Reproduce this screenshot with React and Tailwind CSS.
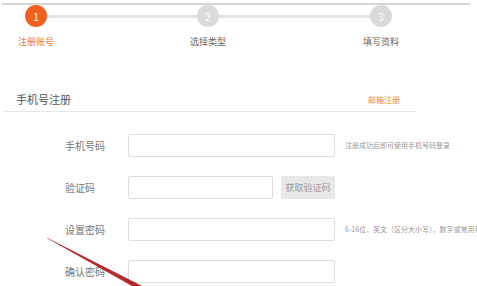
import React from 'react';

const font = { fontFamily: '"Noto Sans CJK SC", "Noto Sans", sans-serif' };

const Field = ({ label, children, hint }) => (
  <div className="flex items-center h-[23px]">
    <div className="w-[128px] shrink-0 pl-[65px] text-[10px] text-[#777]">{label}</div>
    {children}
    {hint && <div className="ml-[10px] shrink-0 text-[7px] text-[#999] whitespace-nowrap">{hint}</div>}
  </div>
);

const Input = ({ w = 'w-[207px]' }) => (
  <div className={`${w} shrink-0 h-[23px] border border-[#dcdcdc] rounded-[2px] bg-white`} />
);

export default function App() {
  return (
    <div className="relative w-[477px] h-[286px] overflow-hidden bg-white" style={font}>
      {/* top rule */}
      <div className="mt-[3px] ml-[2px] w-[468px] h-[2px] bg-[#d6d6d6]" />

      {/* steps */}
      <div className="flex items-center pl-[25px]">
        <div className="w-[22px] h-[22px] rounded-full bg-[#f2601e] text-white text-[10px] flex items-center justify-center">1</div>
        <div className="w-[150px] h-[3px] bg-[#e2e2e2]" />
        <div className="w-[22px] h-[22px] rounded-full bg-[#dadada] text-white text-[10px] flex items-center justify-center">2</div>
        <div className="w-[151px] h-[3px] bg-[#e2e2e2]" />
        <div className="w-[22px] h-[22px] rounded-full bg-[#dadada] text-white text-[10px] flex items-center justify-center">3</div>
      </div>
      <div className="flex mt-[8px] text-[9px] leading-[14px]">
        <div className="w-[72px] text-center text-[#f07a3a]">注册账号</div>
        <div className="w-[72px] ml-[100px] text-center text-[#666]">选择类型</div>
        <div className="w-[72px] ml-[101px] text-center text-[#666]">填写资料</div>
      </div>

      {/* section header */}
      <div className="mt-[39px] ml-[3px] w-[412px] h-[24px] flex items-center justify-between border-b border-[#e6e6e6] pl-[13px] pr-[15px]">
        <span className="text-[11px] text-[#555]">手机号注册</span>
        <span className="text-[8px] text-[#f08a4a]">邮箱注册</span>
      </div>

      {/* form */}
      <div className="mt-[22px] flex flex-col gap-[19px]">
        <Field label="手机号码" hint="注册成功后即可使用手机号码登录">
          <Input />
        </Field>
        <Field label="验证码">
          <Input w="w-[145px]" />
          <div className="ml-[8px] w-[54px] shrink-0 h-[23px] bg-[#e8e8e8] rounded-[2px] text-[9px] text-[#999] flex items-center justify-center">获取验证码</div>
        </Field>
        <Field label="设置密码" hint="6-16位，英文（区分大小写），数字或常用符号">
          <Input />
        </Field>
        <Field label="确认密码">
          <Input />
        </Field>
      </div>

      {/* red arrow overlay */}
      <svg className="absolute left-0 top-0" width="477" height="286" viewBox="0 0 477 286">
        <polygon points="46.5,237.5 47.5,238.5 148,295 150,290" fill="#b42a2f" />
      </svg>
    </div>
  );
}
